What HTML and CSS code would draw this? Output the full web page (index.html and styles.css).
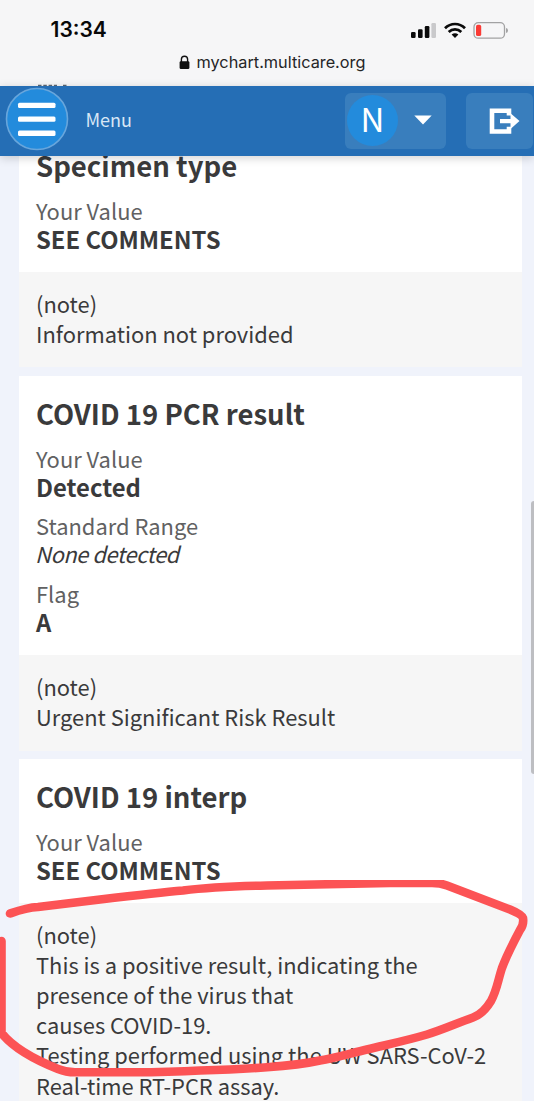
FILE: index.html
```html
<!DOCTYPE html>
<html lang="en">
<head>
<meta charset="utf-8">
<title>Test results</title>
<link rel="stylesheet" href="styles.css">
</head>
<body>
<div class="phone">
  <div class="browser-top">
    <div class="status">
      <span class="clock">13:34</span>
      <svg class="indicators" width="98" height="18" viewBox="0 0 98 18">
        <g fill="#0b0b0b">
          <rect x="1" y="11" width="4.6" height="6" rx="1.2"/>
          <rect x="8" y="8.2" width="4.6" height="8.8" rx="1.2"/>
          <rect x="14.8" y="5" width="4.6" height="12" rx="1.2"/>
        </g>
        <rect x="21.4" y="2" width="4.6" height="15" rx="1.2" fill="#c9c9cb"/>
        <g fill="none" stroke="#0b0b0b" stroke-width="2.7">
          <path d="M35 7.2C40.600 1.600 49.400 1.600 55 7.200"/>
          <path d="M38.700 11C42.400 7.400 47.600 7.400 51.300 11"/>
        </g>
        <path d="M41.600 13.600Q45 10.700 48.400 13.600L45 17Z" fill="#0b0b0b"/>
        <rect x="64" y="1.600" width="30.500" height="15.600" rx="4.300" fill="none" stroke="#a2a2a3" stroke-width="1.300"/>
        <rect x="66" y="3.700" width="5.200" height="11.400" rx="1.700" fill="#fb3b35"/>
        <path d="M96 6.900Q98 7.200 98 9.400T96 11.900Z" fill="#a2a2a3"/>
      </svg>
    </div>
    <div class="address">
      <svg width="11" height="15" viewBox="0 0 11 15">
        <path d="M2.400 7V4.300a3.100 3.100 0 0 1 6.200 0V7" fill="none" stroke="#111" stroke-width="1.400"/>
        <rect x=".6" y="6.300" width="9.800" height="7.700" rx="1.300" fill="#111"/>
      </svg>
      <span class="url">mychart.multicare.org</span>
    </div>
  </div>

  <header class="nav">
    <svg class="sliver" width="32" height="2" viewBox="0 0 32 2"><path d="M0 1.300H19M25 1.300H29" fill="none" stroke="#55606c" stroke-width="1.200" stroke-dasharray="3.500 1.800"/></svg>
    <div class="menu">
      <svg width="64" height="64" viewBox="0 0 64 64">
        <circle cx="32" cy="32" r="30.500" fill="#238bdc" stroke="#68a6dc" stroke-width="1.600"/>
        <g fill="#fff">
          <rect x="13" y="15.700" width="37.500" height="5.400" rx="1.500"/>
          <rect x="13" y="29.400" width="37.500" height="5.400" rx="1.500"/>
          <rect x="13" y="43.600" width="37.500" height="5.400" rx="1.500"/>
        </g>
      </svg>
      <span class="menu-label">Menu</span>
    </div>
    <div class="account">
      <span class="avatar">N</span>
      <svg width="18" height="10" viewBox="0 0 18 10"><path d="M.3.500h17.400L9 9.500Z" fill="#fff"/></svg>
    </div>
    <div class="logout">
      <svg width="32" height="28" viewBox="0 0 32 28">
        <path d="M21 8.500V3.700H4v20.800h17v-4.800" fill="none" stroke="#fff" stroke-width="4.600"/>
        <path d="M12 12h10.500V6.200L31.500 14l-9 8v-5.700H12Z" fill="#fff"/>
      </svg>
    </div>
  </header>

  <main class="results">
    <section class="card">
      <div class="facts">
        <h2>Specimen type</h2>
        <dl><dt>Your Value</dt><dd>SEE COMMENTS</dd></dl>
      </div>
      <div class="note">(note)<br>Information not provided</div>
    </section>

    <section class="card">
      <div class="facts">
        <h2>COVID 19 PCR result</h2>
        <dl><dt>Your Value</dt><dd>Detected</dd></dl>
        <dl><dt>Standard Range</dt><dd class="range">None detected</dd></dl>
        <dl><dt>Flag</dt><dd>A</dd></dl>
      </div>
      <div class="note">(note)<br>Urgent Significant Risk Result</div>
    </section>

    <section class="card">
      <div class="facts">
        <h2>COVID 19 interp</h2>
        <dl><dt>Your Value</dt><dd>SEE COMMENTS</dd></dl>
      </div>
      <div class="note">(note)<br>This is a positive result, indicating the<br>presence of the virus that<br>causes COVID-19.<br>Testing performed using the UW SARS-CoV-2<br>Real-time RT-PCR assay.</div>
    </section>
  </main>

  <span class="scrollbar"></span>
  <svg class="marker" width="534" height="221" viewBox="0 880 534 221">
    <path d="M10 913.500C20 910 27 907.500 38 907C60 904.500 80 902 100 899.500C130 896 160 892.500 183 890.500C210 887 240 886 267 885.500L390 883H432Q440 883 447 885.500L510 909.500Q522 914.500 523 918Q524 925 520 930C512 945 506 957 502 968C498 980 497 990 491 1001Q483 1014 473 1017.500C455 1024 442 1030 427 1034.500C405 1041 385 1045 367 1049.500C350 1053.500 335 1058 320 1060.500C300 1065 285 1066 267 1067.200C245 1069 220 1070 200 1070.500C175 1072 150 1072.300 133 1072.300H75Q66 1072.300 58 1069C38 1061 14 1049 1.500 1033V941"/>
  </svg>
</div>
</body>
</html>
```
FILE: styles.css
```css
* { box-sizing: border-box; }
body { margin: 0; }
.phone {
  position: relative;
  display: flex;
  flex-direction: column;
  width: 534px;
  height: 1101px;
  overflow: hidden;
  background: #f0f3fb;
  color: #3a3a3b;
  font-family: "Noto Sans CJK SC", "Noto Sans", sans-serif;
}

.browser-top {
  flex: none;
  height: 86px;
  padding-top: 17px;
  background: #f6f6f7;
  color: #080808;
  font-family: Inter, "Liberation Sans", sans-serif;
}
.status {
  display: flex;
  justify-content: space-between;
  height: 26px;
  padding: 0 26px 0 50.5px;
}
.clock { font-size: 21px; font-weight: 600; line-height: 26px; }
.indicators { margin-top: 3.5px; }
.address {
  display: flex;
  align-items: center;
  gap: 7px;
  height: 26px;
  margin-top: 6px;
  padding-left: 178.5px;
}
.url { font-size: 16.3px; color: #252526; }

.nav {
  position: relative;
  z-index: 1;
  flex: none;
  display: flex;
  align-items: center;
  height: 70px;
  padding-left: 5px;
  background: #256eb5;
  box-shadow: 0 2px 9px rgba(0, 0, 0, .18);
}
.sliver { position: absolute; left: 38px; top: -2px; }
.menu { display: flex; align-items: center; gap: 16.5px; width: 340px; }
.menu svg { flex: none; margin-top: -4px; }
.menu-label { font-size: 18px; line-height: 24px; color: #d8e7f5; margin-top: -5px; }
.account, .logout {
  display: flex;
  align-items: center;
  height: 56px;
  border-radius: 6px;
  background: #397ebd;
}
.account { width: 101px; gap: 16px; padding-left: 2px; }
.account svg { margin-top: -2px; }
.avatar {
  width: 51px;
  height: 51px;
  margin-top: -1px;
  border-radius: 50%;
  background: #238bdc;
  color: #fff;
  font-size: 33px;
  font-weight: 400;
  line-height: 47px;
  text-align: center;
}
.logout { width: 67px; margin-left: 20px; padding-left: 22px; }

.results { flex: 1; min-height: 0; overflow: hidden; padding: 0 12px 0 18.5px; }
.card { margin-bottom: 8.3px; }
.card:first-child { margin-top: -28px; }
.facts { padding: 19.4px 18px 18.9px 17.5px; background: #fff; }
h2 { margin: 0 0 13.5px; font-size: 27.5px; line-height: 36px; font-weight: 700; }
dl { margin: 0 0 11.8px; font-size: 21.9px; line-height: 28px; }
dl:last-child { margin-bottom: 0; }
dt { color: #616162; }
dd { margin: 0; padding-bottom: 1px; font-size: 23.8px; line-height: 27px; font-weight: 700; }
dd.range {
  font-size: 21.9px;
  font-weight: 400;
  font-style: italic;
  letter-spacing: -.45px;
  text-indent: -1px;
}
.note {
  padding: 16.8px 0 18.4px 17.5px;
  background: #f6f6f6;
  font-size: 21.9px;
  line-height: 30.2px;
  white-space: nowrap;
}

.scrollbar {
  position: absolute;
  top: 501px;
  right: 0;
  width: 3px;
  height: 273px;
  border-radius: 3px 0 0 3px;
  background: #bdbec2;
}
.marker { position: absolute; left: 0; top: 880px; z-index: 2; }
.marker path {
  fill: none;
  stroke: #fc5355;
  stroke-width: 8.6;
  stroke-linecap: round;
  stroke-linejoin: round;
}
```
